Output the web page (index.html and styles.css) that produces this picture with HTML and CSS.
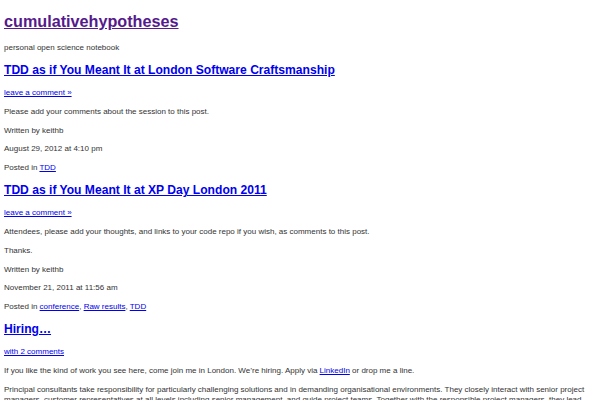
FILE: index.html
```html
<!DOCTYPE html>
<html lang="en">
<head>
    <meta charset="UTF-8">
    <title>cumulativehypotheses</title>
    <link rel="stylesheet" href="styles.css">
</head>
<body>
    <div class="header">
        <h1 class="blog-title"><a href="#">cumulativehypotheses</a></h1>
        <p class="description">personal open science notebook</p>
    </div>

    <div class="post">
        <h2 class="post-title"><a href="#">TDD as if You Meant It at London Software Craftsmanship</a></h2>
        <p class="comments-link"><a href="#">leave a comment &raquo;</a></p>
        <p>Please add your comments about the session to this post.</p>
        <p>Written by keithb</p>
        <p>August 29, 2012 at 4:10 pm</p>
        <p>Posted in <a href="#">TDD</a></p>
    </div>

    <div class="post">
        <h2 class="post-title"><a href="#">TDD as if You Meant It at XP Day London 2011</a></h2>
        <p class="comments-link"><a href="#">leave a comment &raquo;</a></p>
        <p>Attendees, please add your thoughts, and links to your code repo if you wish, as comments to this post.</p>
        <p>Thanks.</p>
        <p>Written by keithb</p>
        <p>November 21, 2011 at 11:56 am</p>
        <p>Posted in <a href="#">conference</a>, <a href="#">Raw results</a>, <a href="#">TDD</a></p>
    </div>

    <div class="post">
        <h2 class="post-title"><a href="#">Hiring&hellip;</a></h2>
        <p class="comments-link"><a href="#">with 2 comments</a></p>
        <p>If you like the kind of work you see here, come join me in London. We&rsquo;re hiring. Apply via <a href="#">LinkedIn</a> or drop me a line.</p>
        <p>Principal consultants take responsibility for particularly challenging solutions and in demanding organisational environments. They closely interact with senior project managers, customer representatives at all levels including senior management, and guide project teams. Together with the responsible project managers, they lead</p>
    </div>
</body>
</html>
```

FILE: styles.css
```css
body {
    font-family: "Liberation Sans", Arial, sans-serif;
    font-size: 8px;
    line-height: 10px;
    color: #333;
    background: white;
    margin: 0;
    padding: 0 4px;
}

a {
    color: #0000ee;
}

p {
    margin: 8.8px 0;
}

.blog-title {
    font-size: 16.2px;
    line-height: 20px;
    margin: 11px 0 0;
}

.blog-title a {
    color: #551a8b;
}

.description {
    margin: 12px 0 0;
}

.post-title {
    font-size: 12.1px;
    line-height: 15px;
    margin: 10px 0;
}
```
